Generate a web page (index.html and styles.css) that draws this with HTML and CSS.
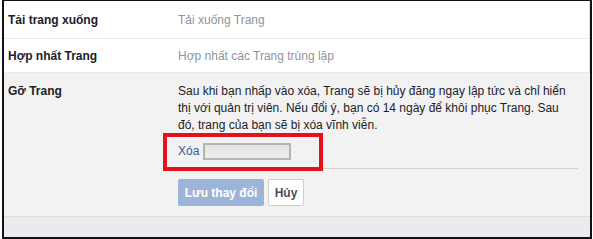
FILE: index.html
```html
<!DOCTYPE html>
<html lang="vi">

    <head>

        <meta charset="UTF-8">
        <meta name="viewport" content="width=device-width, initial-scale=1.0">

        <title>Cài đặt Trang</title>

        <link rel="stylesheet" href="styles.css">

    </head>

    <body>

        <div class="frame">

            <div class="row row-first">
                <div class="row-label">Tải trang xuống</div>
                <div class="row-value">Tải xuống Trang</div>
            </div>

            <div class="row">
                <div class="row-label">Hợp nhất Trang</div>
                <div class="row-value">Hợp nhất các Trang trùng lặp</div>
            </div>

            <div class="row row-edit">
                <div class="row-label">Gỡ Trang</div>
                <div class="edit-area">
                    <p class="edit-text">Sau khi bạn nhấp vào xóa, Trang sẽ bị hủy đăng ngay lập tức và chỉ hiển thị với quản trị viên. Nếu đổi ý, bạn có 14 ngày để khôi phục Trang. Sau đó, trang của bạn sẽ bị xóa vĩnh viễn.</p>

                    <div class="delete-line">
                        <a href="#" class="delete-link">Xóa</a>
                        <span class="delete-field"></span>
                        <span class="highlight"></span>
                    </div>

                    <div class="buttons">
                        <button class="btn btn-save" disabled>Lưu thay đổi</button>
                        <button class="btn btn-cancel">Hủy</button>
                    </div>
                </div>
            </div>

            <div class="page-bottom"></div>

        </div>

    </body>

</html>
```

FILE: styles.css
```css
body {
    margin: 0;
    padding: 0;
    background-color: #fff;
    font-family: "Liberation Sans", Arial, Helvetica, sans-serif;
    font-size: 12px;
    color: #1d2129;
}

.frame {
    box-sizing: border-box;
    margin-left: 2px;
    width: 590px;
    height: 239px;
    border: 2px solid #111;
    border-top-width: 1px;
    display: flex;
    flex-direction: column;
    overflow: hidden;
}

.row {
    display: flex;
    align-items: center;
    height: 33px;
    border-bottom: 1px solid #e9eaed;
    border-right: 1px solid #dddfe2;
}

.row-first {
    height: 37px;
}

.row-label {
    width: 170px;
    padding-left: 4px;
    font-weight: bold;
    color: #1d2129;
    flex-shrink: 0;
}

.row-value {
    color: #90949c;
}

.row-edit {
    align-items: flex-start;
    height: auto;
    padding: 10px 0 10px 0;
    background-color: #f2f2f2;
    border-bottom: 1px solid #dcdee2;
    border-right: none;
}

.row-edit .row-label {
    line-height: 17px;
}

.edit-area {
    width: 400px;
}

.edit-text {
    margin: 0;
    line-height: 17px;
}

.delete-line {
    position: relative;
    display: flex;
    align-items: center;
    height: 34px;
    border-bottom: 1px solid #d3d3d3;
}

.delete-link {
    color: #365899;
    text-decoration: none;
}

.delete-field {
    box-sizing: border-box;
    display: inline-block;
    width: 88px;
    height: 17px;
    margin-left: 4px;
    border: 2px solid #b4b4b4;
    background: linear-gradient(#e4e4e4, #ededed);
}

/* annotation drawn over the screenshot */
.highlight {
    position: absolute;
    left: -15px;
    top: -1px;
    width: 160px;
    height: 38px;
    box-sizing: border-box;
    border: 4px solid #e2131c;
}

.buttons {
    display: flex;
    gap: 4px;
    margin-top: 10px;
}

.btn {
    box-sizing: border-box;
    height: 27px;
    padding: 0;
    font-family: inherit;
    font-size: 12px;
    font-weight: bold;
    white-space: nowrap;
    border-radius: 2px;
}

.btn-save {
    width: 86px;
    color: #fff;
    background-color: #9cb4d8;
    border: 1px solid #9cb4d8;
}

.btn-cancel {
    width: 36px;
    color: #4b4f56;
    background-color: #fff;
    border: 1px solid #ccd0d5;
}

.page-bottom {
    flex: 1;
    background-color: #e9ebee;
}
```
